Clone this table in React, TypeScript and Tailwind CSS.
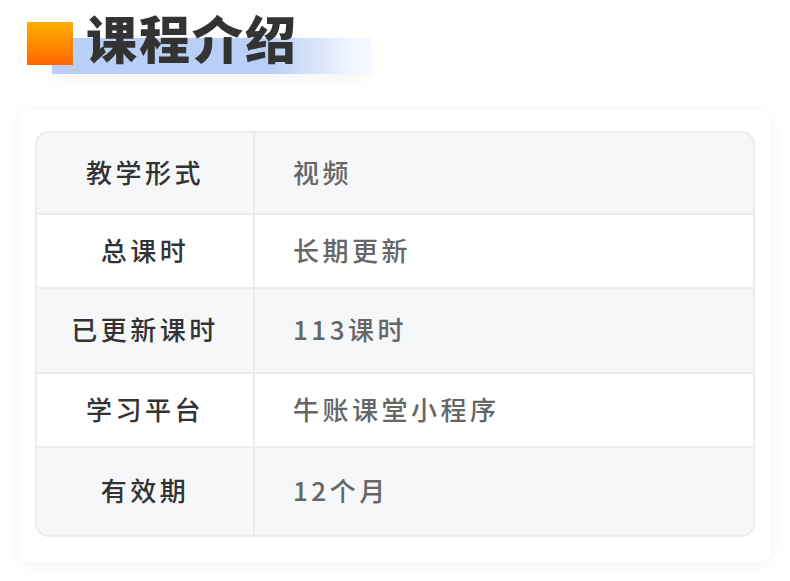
import React from "react";

const rows = [
  { label: "教学形式", value: "视频", h: "h-[82px]", gray: true },
  { label: "总课时", value: "长期更新", h: "h-[74px]", gray: false },
  { label: "已更新课时", value: "113课时", h: "h-[85px]", gray: true },
  { label: "学习平台", value: "牛账课堂小程序", h: "h-[74px]", gray: false },
  { label: "有效期", value: "12个月", h: "h-[87px]", gray: true },
];

export default function App() {
  return (
    <div
      className="h-[581px] w-[790px] overflow-hidden bg-white"
      style={{ fontFamily: '"Noto Sans CJK SC", "Noto Sans", sans-serif' }}
    >
      <div className="relative h-[110px]">
        <div className="absolute left-[52px] top-[38px] h-[36px] w-[319px] bg-gradient-to-r from-[#b9cff5] from-[68%] to-[#f3f7ff] to-[95%] shadow-[0_6px_14px_rgba(0,0,0,0.04)]" />
        <div className="relative flex items-start pl-[27px] pt-[22px]">
          <div className="h-[43px] w-[46px] bg-gradient-to-b from-[#ffad00] to-[#ff6600]" />
          <div className="-mt-[17px] ml-[13px] text-[51px] font-black leading-[64px] tracking-[2px] text-[#333333]">
            课程介绍
          </div>
        </div>
      </div>
      <div className="mx-[19px] rounded-[12px] bg-white px-[16px] pb-[25px] pt-[21px] shadow-[0_2px_14px_rgba(0,0,0,0.06)]">
        <div className="flex flex-col divide-y-2 divide-[#ececec] overflow-hidden rounded-[14px] border-2 border-[#ececec]">
          {rows.map((r) => (
            <div
              key={r.label}
              className={`flex ${r.h} ${r.gray ? "bg-[#f6f7f9]" : "bg-white"}`}
            >
              <div className="flex w-[218px] items-center justify-center border-r-2 border-[#ececec] pb-[4px] text-[26px] font-medium tracking-[3.5px] text-[#333333]">
                {r.label}
              </div>
              <div className="flex flex-1 items-center pb-[4px] pl-[38px] text-[26px] font-medium tracking-[3.5px] text-[#666666]">
                {r.value}
              </div>
            </div>
          ))}
        </div>
      </div>
    </div>
  );
}
